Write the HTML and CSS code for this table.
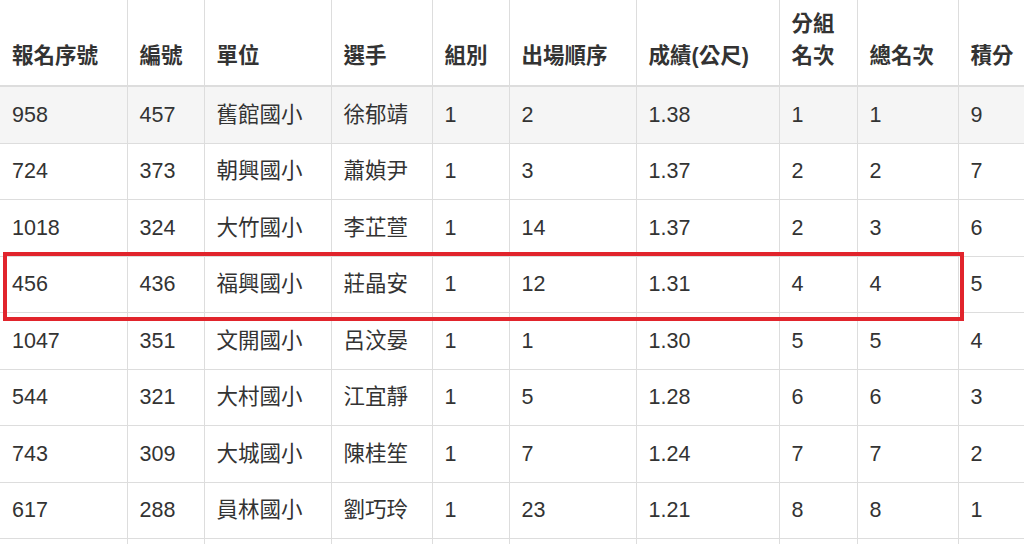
FILE: index.html
```html
<!DOCTYPE html>
<html lang="zh-Hant">
<head>
<meta charset="utf-8">
<title>成績</title>
<link rel="stylesheet" href="styles.css">
</head>
<body>
<div class="wrap">
<table class="results">
  <colgroup>
    <col class="c1"><col class="c2"><col class="c3"><col class="c4"><col class="c5">
    <col class="c6"><col class="c7"><col class="c8"><col class="c9"><col class="c10">
  </colgroup>
  <thead>
    <tr>
      <th>報名序號</th><th>編號</th><th>單位</th><th>選手</th><th>組別</th>
      <th>出場順序</th><th>成績(公尺)</th><th>分組<br>名次</th><th>總名次</th><th>積分</th>
    </tr>
  </thead>
  <tbody>
    <tr class="hl"><td>958</td><td>457</td><td>舊館國小</td><td>徐郁靖</td><td>1</td><td>2</td><td>1.38</td><td>1</td><td>1</td><td>9</td></tr>
    <tr><td>724</td><td>373</td><td>朝興國小</td><td>蕭媜尹</td><td>1</td><td>3</td><td>1.37</td><td>2</td><td>2</td><td>7</td></tr>
    <tr><td>1018</td><td>324</td><td>大竹國小</td><td>李芷萱</td><td>1</td><td>14</td><td>1.37</td><td>2</td><td>3</td><td>6</td></tr>
    <tr><td>456</td><td>436</td><td>福興國小</td><td>莊晶安</td><td>1</td><td>12</td><td>1.31</td><td>4</td><td>4</td><td>5</td></tr>
    <tr><td>1047</td><td>351</td><td>文開國小</td><td>呂汶晏</td><td>1</td><td>1</td><td>1.30</td><td>5</td><td>5</td><td>4</td></tr>
    <tr><td>544</td><td>321</td><td>大村國小</td><td>江宜靜</td><td>1</td><td>5</td><td>1.28</td><td>6</td><td>6</td><td>3</td></tr>
    <tr><td>743</td><td>309</td><td>大城國小</td><td>陳桂笙</td><td>1</td><td>7</td><td>1.24</td><td>7</td><td>7</td><td>2</td></tr>
    <tr><td>617</td><td>288</td><td>員林國小</td><td>劉巧玲</td><td>1</td><td>23</td><td>1.21</td><td>8</td><td>8</td><td>1</td></tr>
    <tr><td>&nbsp;</td><td></td><td></td><td></td><td></td><td></td><td></td><td></td><td></td><td></td></tr>
  </tbody>
</table>
<div class="mark"></div>
</div>
</body>
</html>
```
FILE: styles.css
```css
html, body {
  margin: 0;
  padding: 0;
  background: #fff;
  overflow: hidden;
}
.wrap {
  position: relative;
  width: 1024px;
  height: 544px;
  overflow: hidden;
}
.results {
  border-collapse: collapse;
  table-layout: fixed;
  width: 1060px;
  font-family: "Liberation Sans", Arial, "Noto Sans CJK TC", sans-serif;
  font-size: 21.5px;
  color: #333;
}
.c1 { width: 127px; }
.c2 { width: 77px; }
.c3 { width: 127px; }
.c4 { width: 101px; }
.c5 { width: 77px; }
.c6 { width: 127px; }
.c7 { width: 143px; }
.c8 { width: 78px; }
.c9 { width: 101px; }
.c10 { width: 102px; }

.results th,
.results td {
  text-align: left;
  padding: 0 12px;
  border-left: 1px solid #ddd;
  white-space: nowrap;
}
.results th:first-child,
.results td:first-child {
  border-left: none;
}
.results th {
  font-weight: bold;
  vertical-align: bottom;
  line-height: 32px;
  height: 72px;
  padding-bottom: 13px;
  border-bottom: 2px solid #ddd;
}
.results td {
  vertical-align: middle;
  line-height: 30px;
  height: 55.5px;
  border-top: 1px solid #ddd;
}
.results thead + tbody tr:first-child td {
  border-top: none;
}
.results tr.hl td {
  background: #f5f5f5;
}
.mark {
  position: absolute;
  left: 3px;
  top: 252px;
  width: 953px;
  height: 61px;
  border: 4px solid #e1242c;
}
```
